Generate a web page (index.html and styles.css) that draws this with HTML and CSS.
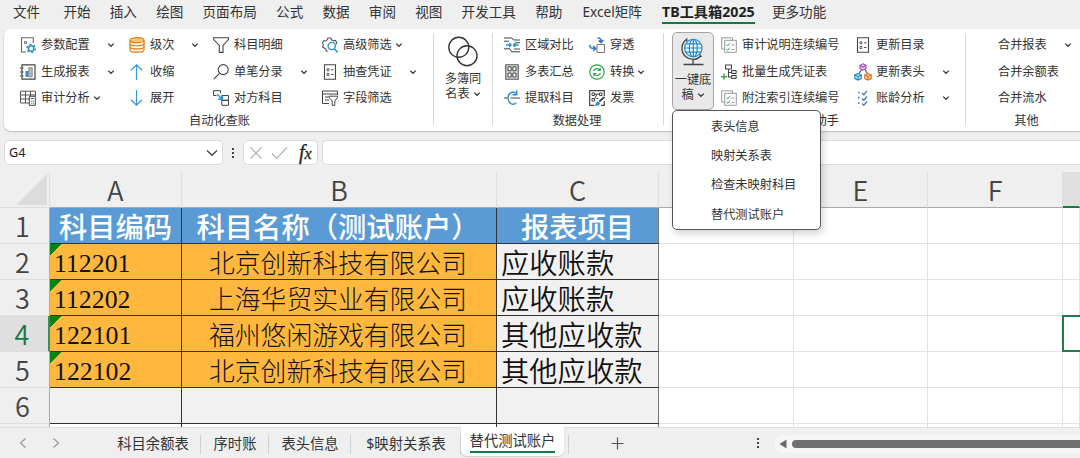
FILE: index.html
```html
<!DOCTYPE html>
<html lang="zh-CN">
<head>
<meta charset="utf-8">
<title>TB工具箱2025</title>
<link rel="stylesheet" href="styles.css">
</head>
<body>
<svg class="defs" width="0" height="0">
  <symbol id="chev" viewBox="0 0 8 8"><path d="M1.2 2.6 4 5.3 6.8 2.6" fill="none" stroke="#333" stroke-width="1.2"/></symbol>
  <symbol id="config" viewBox="0 0 16 16"><path d="M6 15H1.5V.8h11.8V6" fill="none" stroke="#666" stroke-width="1.1"/><path d="M4.5 4.5h2v2h-2z" fill="none" stroke="#777"/><g stroke="#2b8fd0" fill="none"><circle cx="11.2" cy="11.5" r="2.7" stroke-width="1.5"/><circle cx="11.2" cy="11.5" r="4.100" stroke-width="1.5" stroke-dasharray="2 2.300"/></g></symbol>
  <symbol id="report" viewBox="0 0 16 16"><path d="M2 .8h13v14.4H2z" fill="none" stroke="#444" stroke-width="1.2"/><path d="M0 4h3.5M0 8h3.5M0 12h3.5" stroke="#444"/><path d="M5.5 7h3v6h-3z" fill="#2b8fd0"/><path d="M8.8 3.7h3.4v9.2H8.8z" fill="#bbb" stroke="#777" stroke-width=".8"/></symbol>
  <symbol id="audit" viewBox="0 0 16 16"><path d="M9 13H.5V1.2h15v5M.5 5h15M.5 9h9M5.5 1.2V13M10.5 1.2V6" fill="none" stroke="#555"/><path d="M9.3 6.3h6v9h-6zM10.8 8.4h3" fill="#fff" stroke="#444"/><path d="M11 11.2h3M11 13.2h3" stroke="#2b8fd0" stroke-dasharray="1.2 .6"/></symbol>
  <symbol id="db" viewBox="0 0 16 16"><g stroke="#df7d18" stroke-width="1.2"><path d="M1 3.2v9.7c0 3 14 3 14 0V3.2" fill="#fff7e8"/><ellipse cx="8" cy="3.2" rx="7" ry="2.5" fill="#f9c979"/><path d="M1 6.5c0 3 14 3 14 0M1 9.7c0 3 14 3 14 0" fill="none"/></g></symbol>
  <symbol id="up" viewBox="0 0 16 16"><path d="M7.5 16V1M2 6.2 7.5.8 13 6.2" fill="none" stroke="#3498d8" stroke-width="1.2"/></symbol>
  <symbol id="down" viewBox="0 0 16 16"><path d="M7.5 0v15M2 9.8l5.500 5.400L13 9.800" fill="none" stroke="#3498d8" stroke-width="1.2"/></symbol>
  <symbol id="funnel" viewBox="0 0 16 16"><path d="M.7.8h14.8v1.8L10 8.4v7H6.3v-7L.7 2.6z" fill="none" stroke="#444" stroke-width="1.1"/></symbol>
  <symbol id="search" viewBox="0 0 16 16"><circle cx="10.2" cy="5.6" r="5" fill="none" stroke="#444" stroke-width="1.1"/><path d="M6.6 9.3.8 15.2" stroke="#444" stroke-width="1.2"/></symbol>
  <symbol id="relation" viewBox="0 0 16 16"><path d="M3.5 5.5h-3V.7h7v2.5M8.8 5.500h6.700v4.800H8.800zM8.800 10.300h6.700v5H8.800z" fill="none" stroke="#444"/><path d="M4.2 4.2 9 9M9.4 5.3v4H5.2" fill="none" stroke="#2b8fd0" stroke-width="1.4"/></symbol>
  <symbol id="gearsearch" viewBox="0 0 16 16"><path d="M6 14.3 4.3 14l-.4-2-1.7-1-1.6-.9.8-2.2L.5 5.7l1-1.8 2.2.1 1.4-1L5.8 1h3l.8 1.8 1.6.9 2.2-.3 1.4 2.2-1 1.9" fill="none" stroke="#555" stroke-width="1.1"/><circle cx="9.7" cy="9" r="3.6" fill="#fff" stroke="#2b8fd0" stroke-width="1.4"/><path d="m12.3 11.7 3.5 3.8" stroke="#2b8fd0" stroke-width="1.5"/></symbol>
  <symbol id="form" viewBox="0 0 16 16"><path d="M2.5.7h11v14.6h-11z" fill="none" stroke="#444" stroke-width="1.1"/><path d="M5 4.8h2v2H5zM5 9.5h2v2H5z" fill="none" stroke="#555" stroke-width=".9"/><path d="M9 5.8h2.5M9 10.5h2.5" stroke="#555"/></symbol>
  <symbol id="fieldfilter" viewBox="0 0 16 16"><path d="M7 13.5H.5V1h15v4.2M.5 4h15M3 7h3.5M3 10h4" fill="none" stroke="#444"/><path d="M7 6.2h8.7v1L12.8 11v4.3h-2.6V11L7 7.2z" fill="#fff" stroke="#444"/></symbol>
  <symbol id="rings" viewBox="0 0 32 32"><circle cx="11.8" cy="11.3" r="10" fill="none" stroke="#333" stroke-width="1.4"/><circle cx="20" cy="19.7" r="10" fill="none" stroke="#333" stroke-width="1.4"/></symbol>
  <symbol id="compare" viewBox="0 0 16 16"><path d="M0 1h8l1.500 2H16M0 4.200h5M0 11.800h6l1.500 3H16M11 5.800h5M10 12h6" fill="none" stroke="#444"/><path d="M2 8h5M5.200 6 7.200 8l-2 2M14.500 8H9.500m1.900-2-2 2 2 2" fill="none" stroke="#2b8fd0" stroke-width="1.300"/></symbol>
  <symbol id="sheets" viewBox="0 0 16 16"><path d="M1.8.7h12.4v14.6H1.8z" fill="#ddd" stroke="#555" stroke-width="1.1"/><path d="M4 2.8h3.2v4H4zM8.8 2.8H12v4H8.800zM4 9h3.200v4H4zM8.800 9H12v4H8.800z" fill="#fff" stroke="#444"/></symbol>
  <symbol id="extract" viewBox="0 0 16 16"><path d="M0 8h4M6.500 8H16" stroke="#444" stroke-width="1.200"/><path d="M12.300 3.800C9 0 4 2.800 4 8s5 8.200 8.300 4.600M12.800 .3v4.400H8.500" fill="none" stroke="#2b8fd0" stroke-width="1.400"/></symbol>
  <symbol id="pierce" viewBox="0 0 16 16"><path d="M8 7.500h7.500v8H8z" fill="none" stroke="#777"/><path d="M8.500 1c2.500-.3 4 .8 3.600 4.500M9.700 3.400l2.400 2.300 2.200-2.600M1 8c-.5 3 1 3.500 5.500 3.400M4.200 9l2.600 2.400-2.600 2.600" fill="none" stroke="#3b78c2" stroke-width="1.600"/></symbol>
  <symbol id="convert" viewBox="0 0 16 16"><g fill="none" stroke="#27a345" stroke-width="1.200"><circle cx="8" cy="8" r="7.200"/><path d="M4.500 7.200c.7-3 4.500-3.500 6.300-1.200M11.200 3.800V6.500H8.600M11.500 8.800c-.7 3-4.500 3.500-6.300 1.200M4.800 12.200V9.500h2.600"/></g></symbol>
  <symbol id="invoice" viewBox="0 0 16 16"><path d="M5 15.300H.7V.7h14.600V6M15.300 11v4.300H12" fill="none" stroke="#444" stroke-width="1.200"/><path d="M3 3h2.500v2.500H3zM10.500 3H13v2.500h-2.500zM3 8.500h2.500V11H3zM5.500 4.200h5M8 4.200l-2.500 5M7.500 8.500h2" fill="none" stroke="#444"/><path d="m15.500 7-5.200 4.500" stroke="#444" stroke-width="1.800"/><path d="M5 15.500c2 0 1.500-3.500 4-4.200l2 1.800c0 2.500-3 3.200-6 2.400" fill="#2b8fd0"/></symbol>
  <symbol id="globe" viewBox="0 0 28 30"><path d="M8.500 1.500C1.500 6 1.500 15 6.500 19.500c4.500 4 11.500 4 15-.5M14 22.500V27M4.500 27.500h20M7 3l3 3M20.500 17l2 3" fill="none" stroke="#444" stroke-width="1.300"/><g fill="#eefaff" stroke="#2389cc" stroke-width="1.200"><circle cx="14.300" cy="11" r="8.700"/><ellipse cx="14.300" cy="11" rx="4" ry="8.700"/><path d="M14.300 2.300v17.400M5.600 11H23M7 6.800h14.600M7 15.200h14.600" fill="none"/></g></symbol>
  <symbol id="checks" viewBox="0 0 16 16"><path d="M3.500 12H.7V.8h10.800V3" fill="none" stroke="#999"/><path d="M3.700 3.300h11.600v12H3.700z" fill="#fff" stroke="#999"/><path d="m5.300 7.500 1.400 1.400 2.200-2.800M5.300 12l1.400 1.300 2.200-2.700" fill="none" stroke="#3f9a65"/><path d="M10.500 8h3M10.500 12.500h3" stroke="#999"/></symbol>
  <symbol id="batch" viewBox="0 0 16 16"><path d="M4.500 1h6v4h-6zM7.500 5v8h2.500M7.500 8.500h2.500" fill="none" stroke="#444" stroke-width="1.100"/><path d="M10.500 6.500h4.700v3h-4.700zM10.500 11.500h4.700v3h-4.700z" fill="#ddd" stroke="#444"/><path d="M3 9.500v6.300M0 12.700h6" stroke="#36a852" stroke-width="1.400"/></symbol>
  <symbol id="nodes" viewBox="0 0 18 18"><path d="M8 6 5 10.500M10.500 6l3 4.500" stroke="#555" stroke-width="1.200"/><g stroke-width="1.200"><path d="m9 .8 3 1.500v3.200L9 7 6 5.500V2.300zM6.300 2.500 9 4l2.700-1.500" fill="#ecd0f4" stroke="#a44bbf"/><path d="m4 10.500 3.200 1.300v3.700L4 17 .8 15.500v-3.700zM1 12l3 1.500L7 12M4 13.500V17" fill="#c6e8fa" stroke="#2389cc"/><path d="m14 10.500 3.200 1.300v3.700L14 17l-3.200-1.500v-3.700zM11 12l3 1.500 3-1.500M14 13.500V17" fill="#ffdbb2" stroke="#df7418"/></g></symbol>
  <symbol id="tasks" viewBox="0 0 16 16"><path d="m7 3 1.800 1.700L12 .8M7 8.500l1.800 1.700L12 6.300M7 13.500l1.800 1.700 3.200-3.900" fill="none" stroke="#4475b5" stroke-width="1.300"/><path d="M3 2.500h1.600M3 7.700h1.600M3 13h1.600" stroke="#4475b5" stroke-width="1.700"/></symbol>
</svg>

<nav class="tabs">
  <span class="tab">文件</span><span class="tab t2">开始</span><span class="tab">插入</span><span class="tab">绘图</span><span class="tab">页面布局</span><span class="tab">公式</span><span class="tab">数据</span><span class="tab">审阅</span><span class="tab">视图</span><span class="tab">开发工具</span><span class="tab">帮助</span><span class="tab excel">Excel矩阵</span><span class="tab current">TB工具箱2025</span><span class="tab">更多功能</span>
</nav>

<section class="ribbon">
  <div class="group g1">
    <div class="cmds">
      <div class="cmd"><svg><use href="#config"/></svg><b>参数配置</b><svg class="ch far"><use href="#chev"/></svg></div>
      <div class="cmd"><svg><use href="#db"/></svg><b>级次</b><svg class="ch far"><use href="#chev"/></svg></div>
      <div class="cmd"><svg><use href="#funnel"/></svg><b>科目明细</b></div>
      <div class="cmd"><svg><use href="#gearsearch"/></svg><b>高级筛选</b><svg class="ch"><use href="#chev"/></svg></div>
      <div class="cmd"><svg><use href="#report"/></svg><b>生成报表</b><svg class="ch far"><use href="#chev"/></svg></div>
      <div class="cmd"><svg><use href="#up"/></svg><b>收缩</b></div>
      <div class="cmd"><svg><use href="#search"/></svg><b>单笔分录</b><svg class="ch far"><use href="#chev"/></svg></div>
      <div class="cmd"><svg><use href="#form"/></svg><b>抽查凭证</b><svg class="ch far"><use href="#chev"/></svg></div>
      <div class="cmd"><svg><use href="#audit"/></svg><b>审计分析</b><svg class="ch"><use href="#chev"/></svg></div>
      <div class="cmd"><svg><use href="#down"/></svg><b>展开</b></div>
      <div class="cmd"><svg><use href="#relation"/></svg><b>对方科目</b></div>
      <div class="cmd"><svg><use href="#fieldfilter"/></svg><b>字段筛选</b></div>
    </div>
    <div class="caption">自动化查账</div>
  </div>
  <div class="group g2">
    <div class="big"><svg class="i32"><use href="#rings"/></svg><b>多簿同</b><b class="line">名表<svg class="ch"><use href="#chev"/></svg></b></div>
  </div>
  <div class="group g3">
    <div class="cmds">
      <div class="cmd"><svg><use href="#compare"/></svg><b>区域对比</b></div>
      <div class="cmd"><svg><use href="#pierce"/></svg><b>穿透</b></div>
      <div class="cmd"><svg><use href="#sheets"/></svg><b>多表汇总</b></div>
      <div class="cmd"><svg><use href="#convert"/></svg><b>转换</b><svg class="ch"><use href="#chev"/></svg></div>
      <div class="cmd"><svg><use href="#extract"/></svg><b>提取科目</b></div>
      <div class="cmd"><svg><use href="#invoice"/></svg><b>发票</b></div>
    </div>
    <div class="caption">数据处理</div>
  </div>
  <div class="group g4">
    <div class="big open"><svg class="iglobe"><use href="#globe"/></svg><b>一键底</b><b class="line">稿<svg class="ch"><use href="#chev"/></svg></b>
      <div class="menu"><div>表头信息</div><div>映射关系表</div><div>检查未映射科目</div><div>替代测试账户</div></div>
    </div>
    <div class="side">
      <div class="cmds">
        <div class="cmd"><svg><use href="#checks"/></svg><b>审计说明连续编号</b></div>
        <div class="cmd"><svg><use href="#form"/></svg><b>更新目录</b></div>
        <div class="cmd"><svg><use href="#batch"/></svg><b>批量生成凭证表</b></div>
        <div class="cmd"><svg class="i18"><use href="#nodes"/></svg><b>更新表头</b><svg class="ch far"><use href="#chev"/></svg></div>
        <div class="cmd"><svg><use href="#checks"/></svg><b>附注索引连续编号</b></div>
        <div class="cmd"><svg><use href="#tasks"/></svg><b>账龄分析</b><svg class="ch far"><use href="#chev"/></svg></div>
      </div>
      <div class="caption">助手</div>
    </div>
  </div>
  <div class="group g5">
    <div class="cmds">
      <div class="cmd"><b>合并报表</b><svg class="ch far"><use href="#chev"/></svg></div>
      <div class="cmd"><b>合并余额表</b></div>
      <div class="cmd"><b>合并流水</b></div>
    </div>
    <div class="caption">其他</div>
  </div>
</section>

<section class="formula">
  <div class="namebox"><span>G4</span><svg width="12" height="8" viewBox="0 0 12 8"><path d="m1 1.500 5 4.800 5-4.800" fill="none" stroke="#444" stroke-width="1.300"/></svg></div>
  <div class="dots"><i></i><i></i><i></i></div>
  <div class="fx">
    <svg width="14" height="14" viewBox="0 0 14 14"><path d="m1.500 1.500 11 11m0-11-11 11" stroke="#b2b2b2" stroke-width="1.200"/></svg>
    <svg width="17" height="14" viewBox="0 0 17 14"><path d="m1 7.500 4.800 4.700L16 1.500" fill="none" stroke="#b2b2b2" stroke-width="1.200"/></svg>
    <em>f<small>x</small></em>
  </div>
  <div class="input"></div>
</section>

<section class="sheet">
  <div class="hd corner"><svg width="31" height="31" viewBox="0 0 31 31"><path d="M31 0v31H0z" fill="#dcdcdc"/></svg></div><div class="hd">A</div><div class="hd">B</div><div class="hd">C</div><div class="hd"></div><div class="hd">E</div><div class="hd">F</div><div class="hd sel"></div>
  <div class="rn">1</div><div class="c title">科目编码</div><div class="c title long">科目名称（测试账户）</div><div class="c title gr">报表项目</div><div class="c"></div><div class="c"></div><div class="c"></div><div class="c"></div>
  <div class="rn">2</div><div class="c code">112201</div><div class="c name">北京创新科技有限公司</div><div class="c item">应收账款</div><div class="c"></div><div class="c"></div><div class="c"></div><div class="c"></div>
  <div class="rn">3</div><div class="c code">112202</div><div class="c name">上海华贸实业有限公司</div><div class="c item">应收账款</div><div class="c"></div><div class="c"></div><div class="c"></div><div class="c"></div>
  <div class="rn on">4</div><div class="c code">122101</div><div class="c name">福州悠闲游戏有限公司</div><div class="c item">其他应收款</div><div class="c"></div><div class="c"></div><div class="c"></div><div class="c active"></div>
  <div class="rn">5</div><div class="c code">122102</div><div class="c name">北京创新科技有限公司</div><div class="c item">其他应收款</div><div class="c"></div><div class="c"></div><div class="c"></div><div class="c"></div>
  <div class="rn">6</div><div class="c blank"></div><div class="c blank"></div><div class="c item"></div><div class="c"></div><div class="c"></div><div class="c"></div><div class="c"></div>
  <div class="rn last"></div><div class="c edge"></div><div class="c edge"></div><div class="c edge gr"></div><div class="c last"></div><div class="c last"></div><div class="c last"></div><div class="c last"></div>
</section>

<footer class="bottom">
  <div class="nav"><svg width="8" height="12" viewBox="0 0 8 12"><path d="M6.500 1.500 1.500 6l5 4.500" fill="none" stroke="#999" stroke-width="1.200"/></svg><svg width="8" height="12" viewBox="0 0 8 12"><path d="m1.500 1.500 5 4.500-5 4.500" fill="none" stroke="#999" stroke-width="1.200"/></svg></div>
  <div class="st w1">科目余额表</div><div class="st w2">序时账</div><div class="st w3">表头信息</div><div class="st w4">$映射关系表</div><div class="st now"><span>替代测试账户</span></div><div class="st plus"><svg width="13" height="13" viewBox="0 0 13 13"><path d="M6.500.5v12M.5 6.500h12" stroke="#555" stroke-width="1.200"/></svg></div>
  <div class="dots"><i></i><i></i><i></i></div>
  <div class="scroll"><svg width="8" height="10" viewBox="0 0 8 10"><path d="M7.500.5v9L.5 5z" fill="#6b6b6b"/></svg><div class="thumb"></div></div>
</footer>
</body>
</html>
```

FILE: styles.css
```css
* { box-sizing: border-box; }
body { margin: 0; width: 1080px; height: 458px; overflow: hidden; background: #efefef; color: #333; font: 12.2px/16px "Noto Sans", "Noto Sans CJK SC", sans-serif; white-space: nowrap; }
b { font-weight: 400; }
svg { display: block; flex: none; }
.defs { position: absolute; }

.tabs { display: flex; height: 29px; padding: 2px 0 3px 13px; gap: 19.2px; font-size: 13.6px; line-height: 20px; }
.tab { height: 22px; }
.t2 { margin-left: 4px; }
.excel { margin-left: 1px; }
.current { margin: 0 -2px 0 1px; font-size: 14.2px; font-weight: 700; color: #222; border-bottom: 2px solid #107c41; }

.ribbon { display: flex; margin-left: 4px; width: 1076px; height: 102px; padding-top: 4px; background: #fff; border-radius: 7px 0 0 7px; box-shadow: 0 1px 2px #bbb; }
.group { height: 92px; border-right: 1px solid #d8d8d8; }
.cmds { display: grid; grid-template-rows: repeat(3, 26.6px); height: 80px; padding-top: 0; }
.cmd { display: flex; align-items: center; height: 24px; }
.cmd > svg:first-child { width: 16px; height: 16px; margin-right: 5px; }
.cmd > svg.i18:first-child { width: 18px; height: 18px; margin: 0 4px 0 -1px; }
.cmd svg.ch, .line svg.ch { width: 8px; height: 8px; margin-left: 3px; }
.cmd svg.far { margin-left: auto; }
.caption { height: 16px; text-align: center; line-height: 16px; }
.g1 { width: 430px; }
.g1 .cmds { grid-template-columns: 95px 70px 95px 95px; column-gap: 14px; padding-left: 16px; }
.g1 .caption { padding-left: 2px; }
.g2 { width: 59px; }
.g3 { width: 171px; }
.g3 .cmds { grid-template-columns: 85px 70px; padding-left: 11px; }
.g3 .caption { padding-right: 2px; }
.g4 { width: 302px; display: flex; padding-left: 8px; }
.g5 { flex: 1; border: 0; }
.g5 .cmds { padding: 0 8px 0 32px; }
.g5 .cmd > svg:first-child { margin: 0; }
.g5 .caption { padding-left: 7px; }
.big { display: flex; flex-direction: column; align-items: center; line-height: 15px; }
.line { display: flex; align-items: center; }
.i32 { width: 32px; height: 32px; margin: 3px 0 3px; }
.open { position: relative; width: 42px; height: 78px; margin-top: -1px; background: #e9e9e9; border: 1px solid #a5a5a5; border-radius: 5px; }
.iglobe { width: 28px; height: 30px; margin: 4px 0 5px; }
.side { padding-left: 7px; }
.side .cmds { grid-template-columns: 134px 95px; }
.side .caption { width: 118px; text-align: right; }
.menu { position: absolute; z-index: 5; left: -1px; top: 77px; width: 149px; height: 120px; padding: 1px 0 0 38px; background: #fff; border: 1px solid #555; border-radius: 5px; box-shadow: 2px 4px 7px rgba(0,0,0,.17); line-height: 29.2px; }

.formula { display: flex; height: 41px; padding: 9px 0 7px 4px; }
.namebox, .fx, .input { height: 25px; background: #fff; border: 1px solid #dadada; border-radius: 5px; }
.namebox { width: 219px; display: flex; align-items: center; justify-content: space-between; padding: 0 4px; color: #222; font-size: 12.6px; }
.dots { width: 20px; display: flex; flex-direction: column; align-items: center; justify-content: center; gap: 2px; }
.dots i { width: 2px; height: 2px; background: #444; }
.fx { width: 75px; display: flex; align-items: center; gap: 8px; padding-left: 5px; }
.fx em { font: italic 20px/20px "Liberation Serif", serif; padding-left: 3px; color: #222; -webkit-text-stroke: .3px #222; }
.fx small { font-size: 16px; }
.input { flex: 1; margin-left: 4px; border-right: 0; border-radius: 5px 0 0 5px; }

.sheet { display: grid; grid-template-columns: 50px 132px 315px 162px 135px 134px 135px 17px; grid-template-rows: repeat(7, 36px) 3px; height: 255px; background: #fff; overflow: hidden; font-family: "Noto Sans CJK SC", sans-serif; }
.hd, .rn { background: #efefef; color: #444; font-size: 27px; font-weight: 350; line-height: 36px; text-align: center; }
.hd { border-right: 1px solid #dedede; border-bottom: 1px solid #aaa; }
.corner { display: flex; justify-content: flex-end; align-items: flex-end; padding: 0 2px 2px 0; border-bottom-color: #ddd; }
.sel { background: #e0e0e0; border-bottom: 2px solid #107c41; }
.rn { border-right: 1px solid #aaa; border-bottom: 1px solid #dedede; padding-right: 4px; }
.on { background: #dfdfdf; color: #1c7544; border-right: 2px solid #3c8c60; }
.c { border-right: 1px solid #e2e2e2; border-bottom: 1px solid #e2e2e2; color: #111; line-height: 35px; }
.title, .code, .name, .blank, .item, .edge { border-color: #333; }
.title { background: #5b9bd5; color: #fff; font-size: 28.3px; font-weight: 500; text-align: center; }
.long { padding-right: 2px; }
.code, .name { background: #ffb83d; font-size: 25.8px; }
.code { padding-left: 4px; font-family: "Liberation Serif", serif; line-height: 39px; background: linear-gradient(135deg, #0a8212 8px, #ffb83d 8.5px); }
.name { padding-right: 2px; text-align: center; font-weight: 300; }
.item { padding-left: 4px; font-size: 28.3px; font-weight: 350; border-right-color: #777; }
.gr { border-right-color: #777; }
.blank, .item { background: #f1f1f1; }
.edge, .last { border-bottom: 0; }
.active { border: 2px solid #217a4b; border-right: 0; margin: -1px 0 0 -1px; }

.bottom { display: flex; height: 31px; border-top: 1px solid #ddd; background: #efefef; font-size: 14.3px; }
.nav { display: flex; gap: 25px; align-items: center; width: 105px; padding-left: 19px; }
.st { text-align: center; line-height: 32px; }
.w1 { width: 96px; } .w2 { width: 68px; } .w3 { width: 82px; } .w4 { width: 110px; }
.w1, .w2, .w3, .w4 { background: linear-gradient(#d0d0d0, #d0d0d0) right 7px / 1px 19px no-repeat; }
.now { width: 103px; height: 29px; margin-top: -1px; background: #fff; border-radius: 0 0 6px 6px; line-height: 28px; box-shadow: 0 1px 2px #ccc; }
.now span { display: inline-block; height: 26px; border-bottom: 2px solid #107c41; }
.plus { width: 105px; margin-left: 4px; display: flex; align-items: center; justify-content: center; background: linear-gradient(#d0d0d0, #d0d0d0) left 7px / 1px 19px no-repeat; padding-right: 6px; }
.bottom .dots { margin-left: 75px; width: 20px; }
.scroll { flex: 1; height: 18px; margin: 7px 0 0 6px; background: #f6f6f6; border-radius: 9px 0 0 9px; display: flex; align-items: center; padding-left: 5px; gap: 5px; }
.thumb { flex: 1; height: 8px; background: #707070; border-radius: 4px 0 0 4px; }
```
